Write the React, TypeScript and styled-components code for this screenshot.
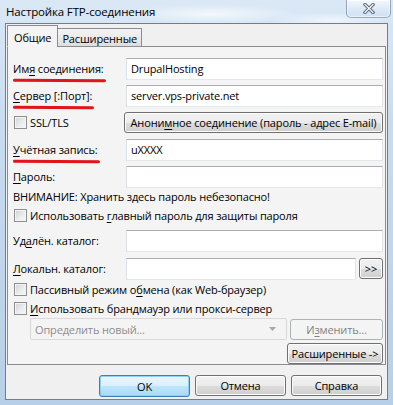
import styled, { createGlobalStyle } from 'styled-components';

const GlobalStyle = createGlobalStyle`
  html, body {
    margin: 0;
    padding: 0;
  }
  body {
    width: 393px;
    height: 405px;
    overflow: hidden;
    font-family: "Open Sans", "Noto Sans", sans-serif;
    font-size: 11px;
    letter-spacing: -0.15px;
    color: #000;
  }
  * {
    box-sizing: border-box;
  }
`;

const Window = styled.div`
    width: 393px;
    height: 405px;
    display: flex;
    flex-direction: column;
    padding: 0 5px 5px 5px;
    background:
        radial-gradient(ellipse 90px 10px at 210px 14px, rgba(255, 255, 255, 0.7), transparent),
        radial-gradient(ellipse 60px 8px at 330px 20px, rgba(255, 255, 255, 0.6), transparent),
        linear-gradient(180deg, #dae8f6 0%, #c9dcef 30%, #b7cfe8 100%);
`;

const TitleBar = styled.div`
    height: 23px;
    display: flex;
    align-items: flex-start;
    padding-left: 1px;
    .title {
        margin-top: 4px;
        font-size: 11.5px;
        color: #000;
    }
`;

const CloseButton = styled.div`
    margin-left: auto;
    margin-right: -3px;
    width: 45px;
    height: 18px;
    border: 1px solid rgba(70, 90, 120, 0.5);
    border-top: none;
    border-radius: 0 0 5px 5px;
    background: linear-gradient(180deg, rgba(255, 255, 255, 0.7) 0%, rgba(225, 236, 247, 0.55) 50%, rgba(200, 218, 238, 0.55) 100%);
    box-shadow: inset 0 0 0 1px rgba(255, 255, 255, 0.5);
    display: flex;
    align-items: center;
    justify-content: center;
`;

const Client = styled.div`
    flex: 1;
    display: flex;
    flex-direction: column;
    background: #f0f0f0;
    border: 1px solid #707e8e;
    padding: 1px 1px 0 1px;
`;

const Tabs = styled.div`
    display: flex;
    align-items: flex-end;
    height: 22px;
    margin-bottom: -1px;
    position: relative;
    z-index: 1;
`;

const Tab = styled.div<{ $active?: boolean }>`
    height: ${(p) => (p.$active ? '22px' : '19px')};
    padding: ${(p) => (p.$active ? '2px 6px 0 6px' : '1px 4px 0 4px')};
    border: 1px solid #898c95;
    border-bottom: ${(p) => (p.$active ? '1px solid #f4f4f4' : '1px solid #898c95')};
    margin-left: ${(p) => (p.$active ? '0' : '-1px')};
    background: ${(p) => (p.$active ? '#f4f4f4' : 'linear-gradient(180deg, #f3f3f3 0%, #ebebeb 50%, #dddddd 100%)')};
    display: flex;
    align-items: center;
`;

const Panel = styled.div`
    height: 319px;
    border: 1px solid #898c95;
    background: #f4f4f4;
    padding: 10px 2px 0 5px;
    display: flex;
    flex-direction: column;
`;

const Row = styled.div<{ $top?: number; $h?: number; $indent?: number; $end?: boolean }>`
    display: flex;
    align-items: center;
    justify-content: ${(p) => (p.$end ? 'flex-end' : 'flex-start')};
    margin-top: ${(p) => p.$top ?? 0}px;
    height: ${(p) => p.$h ?? 23}px;
    padding-left: ${(p) => p.$indent ?? 0}px;
    gap: 3px;
`;

const Label = styled.span<{ $w?: number }>`
    width: ${(p) => p.$w ?? 110}px;
    flex: none;
    white-space: nowrap;
`;

const Marked = styled.span`
    position: relative;
    &::after {
        content: '';
        position: absolute;
        left: 0;
        right: -2px;
        bottom: -6px;
        height: 3px;
        border-radius: 2px;
        background: #e0141a;
        transform: rotate(0.4deg);
    }
`;

const Field = styled.input`
    flex: 1;
    min-width: 0;
    height: 22px;
    border: 1px solid;
    border-color: #abadb3 #e2e3ea #e3e9ef #dbdfe6;
    background: #fff;
    padding: 0 4px;
    font: inherit;
    letter-spacing: inherit;
    color: #000;
    outline: none;
`;

const Button = styled.button<{ $primary?: boolean; $w?: number }>`
    height: ${(p) => (p.$primary ? 22 : 21)}px;
    width: ${(p) => (p.$w ? `${p.$w}px` : 'auto')};
    flex: ${(p) => (p.$w ? 'none' : '1')};
    padding: 0 2px;
    font: inherit;
    letter-spacing: inherit;
    color: #000;
    border: 1px solid ${(p) => (p.$primary ? '#3c7fb1' : '#707070')};
    border-radius: 3px;
    background: ${(p) =>
        p.$primary
            ? 'linear-gradient(180deg, #eaf6fd 0%, #d9f0fc 50%, #bee6fd 51%, #a7d9f5 100%)'
            : 'linear-gradient(180deg, #f2f2f2 0%, #ebebeb 50%, #dddddd 51%, #cfcfcf 100%)'};
    box-shadow: inset 0 0 0 1px ${(p) => (p.$primary ? '#8fd0f5' : '#fcfcfc')};
    white-space: nowrap;
    overflow: hidden;
    &:disabled {
        border-color: #adb2b5;
        background: #f4f4f4;
        box-shadow: none;
        color: #838383;
    }
`;

const Check = styled.span`
    width: 13px;
    height: 13px;
    flex: none;
    margin-left: 1px;
    border: 1px solid #8e8f8f;
    background: linear-gradient(135deg, #cfd2d7 0%, #eceef0 60%, #f7f7f7 100%);
    box-shadow: inset 0 0 0 1px #f4f4f4;
`;

const Note = styled.div`
    height: 17px;
    display: flex;
    align-items: center;
`;

const Combo = styled.div`
    flex: 1;
    height: 22px;
    border: 1px solid #d9d9d9;
    border-radius: 2px;
    background: #f4f4f4;
    color: #8d8d8d;
    padding: 0 4px;
    display: flex;
    align-items: center;
    justify-content: space-between;
    .arrow {
        margin-right: 6px;
    }
`;

const Footer = styled.div`
    display: flex;
    justify-content: flex-end;
    gap: 5px;
    padding: 10px 4px 0 0;
`;

const U = styled.u`
    text-decoration-thickness: 1px;
    text-underline-offset: 2px;
`;

const CheckRow = ({ children, top = 0 }: { children: React.ReactNode; top?: number }) => (
    <Row $top={top} $h={19}>
        <Check />
        <span>{children}</span>
    </Row>
);

const App = () => {
    return (
        <>
            <GlobalStyle />
            <Window>
                <TitleBar>
                    <span className="title">Настройка FTP-соединения</span>
                    <CloseButton>
                        <svg width="12" height="11" viewBox="0 0 12 11">
                            <path d="M2 1.5 L10 9.5 M10 1.5 L2 9.5" stroke="#5b6572" strokeWidth="3.2" strokeLinecap="square" />
                            <path d="M2 1.5 L10 9.5 M10 1.5 L2 9.5" stroke="#f4f6f8" strokeWidth="1.3" strokeLinecap="square" />
                        </svg>
                    </CloseButton>
                </TitleBar>
                <Client>
                    <Tabs>
                        <Tab $active>Общие</Tab>
                        <Tab>Расширенные</Tab>
                    </Tabs>
                    <Panel>
                        <Row>
                            <Label>
                                <Marked>
                                    Им<U>я</U> соединения:
                                </Marked>
                            </Label>
                            <Field readOnly defaultValue="DrupalHosting" />
                        </Row>
                        <Row $top={4}>
                            <Label>
                                <Marked>
                                    <U>С</U>ервер [:Порт]:
                                </Marked>
                            </Label>
                            <Field readOnly defaultValue="server.vps-private.net" />
                        </Row>
                        <Row $top={4}>
                            <Check />
                            <Label $w={91}>SSL/TLS</Label>
                            <Button>
                                Анони<U>м</U>ное соединение (пароль - адрес E-mail)
                            </Button>
                        </Row>
                        <Row $top={4}>
                            <Label>
                                <Marked>
                                    <U>У</U>чётная запись:
                                </Marked>
                            </Label>
                            <Field readOnly defaultValue="uXXXX" />
                        </Row>
                        <Row $top={4}>
                            <Label>
                                <U>П</U>ароль:
                            </Label>
                            <Field readOnly type="password" />
                        </Row>
                        <Note>ВНИМАНИЕ: Хранить здесь пароль небезопасно!</Note>
                        <CheckRow top={1}>
                            Использовать <U>г</U>лавный пароль для защиты пароля
                        </CheckRow>
                        <Row $top={4}>
                            <Label>
                                Уд<U>а</U>лён. каталог:
                            </Label>
                            <Field readOnly />
                        </Row>
                        <Row $top={5}>
                            <Label>
                                <U>Л</U>окальн. каталог:
                            </Label>
                            <Field readOnly />
                            <Button $w={24}>&gt;&gt;</Button>
                        </Row>
                        <CheckRow>
                            Пассивный режим о<U>б</U>мена (как Web-браузер)
                        </CheckRow>
                        <CheckRow>
                            <U>И</U>спользовать брандмауэр или прокси-сервер
                        </CheckRow>
                        <Row $indent={17} $h={22}>
                            <Combo>
                                <span>Определить новый...</span>
                                <svg className="arrow" width="7" height="4" viewBox="0 0 7 4">
                                    <path d="M0 0 H7 L3.5 4 Z" fill="#a8a8a8" />
                                </svg>
                            </Combo>
                            <Button $w={93} disabled>
                                И<U>з</U>менить...
                            </Button>
                        </Row>
                        <Row $top={2} $h={22} $end>
                            <Button $w={96}>Расширенные -&gt;</Button>
                        </Row>
                    </Panel>
                    <Footer>
                        <Button $primary $w={91}>
                            OK
                        </Button>
                        <Button $w={91}>Отмена</Button>
                        <Button $w={91}>Справка</Button>
                    </Footer>
                </Client>
            </Window>
        </>
    );
};

export default App;
